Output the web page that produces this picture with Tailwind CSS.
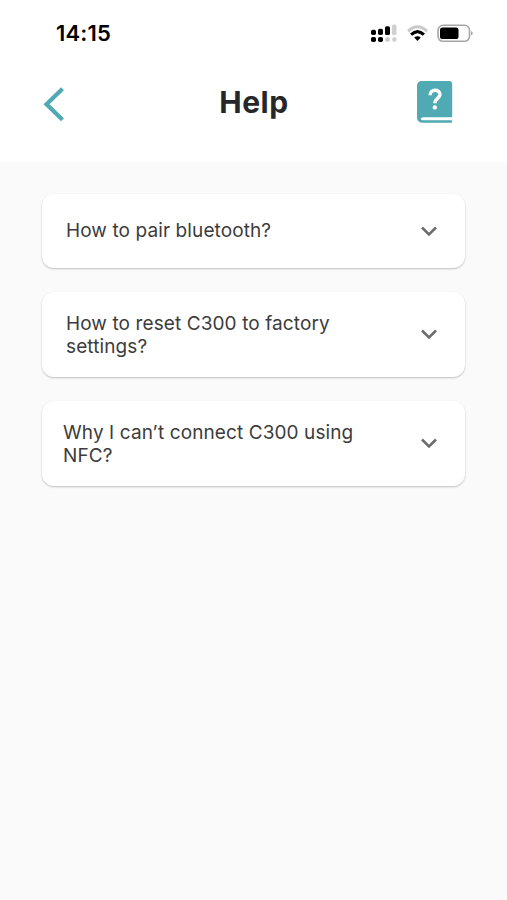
<!DOCTYPE html>
<html lang="en">
<head>
  <meta charset="UTF-8">
  <meta name="viewport" content="width=device-width, initial-scale=1.0">
  <title>Help</title>
  <script src="https://cdn.jsdelivr.net/npm/@tailwindcss/browser@4"></script>
</head>
<body class="min-h-screen bg-[#fafafa] font-[Inter,sans-serif]">
<header class="h-[162px] bg-white">
  <!-- Status bar -->
  <div class="flex h-[66px] items-center justify-between pl-14 pr-[34px]">
    <span class="text-[22px] font-semibold leading-none tracking-[0.2px] text-black">14:15</span>
    <div class="flex items-center">
      <svg class="h-5 w-[27px]" viewBox="0 0 27 20">
        <rect x="1" y="6.8" width="5" height="5.2" rx="1.8"/>
        <rect x="8" y="5.8" width="5" height="6.2" rx="1.8"/>
        <rect x="15" y="3.3" width="5" height="8.7" rx="1.6"/>
        <rect x="22" y="1.5" width="4.5" height="10.5" rx="1.6" fill="#d0d0d0"/>
        <rect x="1" y="14" width="5" height="5" rx="1.8"/>
        <rect x="8" y="14" width="5" height="5" rx="1.8"/>
        <rect x="15.2" y="14.2" width="4.6" height="4.6" rx="1.8" fill="#c8c8c8"/>
        <rect x="22.2" y="14.2" width="4.3" height="4.6" rx="1.8" fill="#d0d0d0"/>
      </svg>
      <svg class="ml-[10px] h-5 w-[21px]" viewBox="0 0 21 20" fill="none" stroke-width="2.8">
        <path d="M1 8.2Q10.5 -.6 20 8.2" stroke="#c8c8c8"/>
        <path d="M4.1 11.7Q10.5 5.5 16.9 11.7" stroke="#000" stroke-width="3.2"/>
        <path d="M7.2 14.6Q10.5 11.9 13.8 14.6L10.5 18Z" fill="#000"/>
      </svg>
      <svg class="ml-[9px] h-5 w-[36px]" viewBox="0 0 36 20">
        <rect x="1" y="2.3" width="31.5" height="16" rx="5" fill="#fff" stroke="#a6a6a6" stroke-width="1.6"/>
        <rect x="3" y="4.5" width="18.5" height="11.6" rx="2.6"/>
        <path d="M34 8v4.6q1.7-.8 1.7-2.3T34 8Z" fill="#a6a6a6"/>
      </svg>
    </div>
  </div>

  <!-- Title bar -->
  <div class="flex items-center justify-between pl-[43px] pr-[54px] pt-[15px]">
    <svg class="mt-[3px] h-[36px] w-[22px]" viewBox="0 0 22 36" fill="none" stroke="#50aab4" stroke-width="4.2">
      <path d="M19.5 2.8L3.5 18.3L19.5 33.8"/>
    </svg>
    <h1 class="pl-[26px] text-[30px] font-bold leading-[42px] tracking-[0.5px] text-[#25272b]">Help</h1>
    <svg class="h-[42px] w-[36px]" viewBox="0 0 36 42">
      <path d="M5 0H32Q35.2 0 35.2 3.2V35.5Q35.2 36.3 34.4 36.3H6.5Q3.7 36.3 3.7 37.8T6.5 39.3H34.4Q35.2 39.3 35.2 40T34.4 41.8H6Q0 41.8 0 36V5Q0 0 5 0Z" fill="#50aab4"/>
      <path d="M13.1 14.2C13 7.8 23 7.6 23 13.6C23 17.4 17.8 17.6 17.8 22.2" fill="none" stroke="#fff" stroke-width="3.5"/>
      <circle cx="17.8" cy="26.4" r="2.2" fill="#fff"/>
    </svg>
  </div>
</header>

<!-- Questions -->
<main class="flex flex-col gap-6 pl-[42px] pr-[42px] pt-8 text-[19px] leading-[23px] tracking-[0.1px] text-[#3c3c3c]">
  <div class="flex h-[74px] items-center justify-between rounded-xl bg-white pl-6 pr-[27px] shadow-[0_1px_2px_rgba(0,0,0,0.24)]">
    <p class="pb-0.5">How to pair bluetooth?</p>
    <svg class="h-[11px] w-[18px]" viewBox="0 0 18 11" fill="none" stroke="#6c6c6c" stroke-width="2.5">
      <path d="M2 1.5L9 8.5L16 1.5"/>
    </svg>
  </div>
  <div class="flex h-[85px] items-center justify-between rounded-xl bg-white pl-6 pr-[27px] shadow-[0_1px_2px_rgba(0,0,0,0.24)]">
    <p>How to reset C300 to factory<br>settings?</p>
    <svg class="h-[11px] w-[18px]" viewBox="0 0 18 11" fill="none" stroke="#6c6c6c" stroke-width="2.5">
      <path d="M2 1.5L9 8.5L16 1.5"/>
    </svg>
  </div>
  <div class="flex h-[85px] items-center justify-between rounded-xl bg-white pl-[21px] pr-[27px] shadow-[0_1px_2px_rgba(0,0,0,0.24)]">
    <p>Why I can’t connect C300 using<br>NFC?</p>
    <svg class="h-[11px] w-[18px]" viewBox="0 0 18 11" fill="none" stroke="#6c6c6c" stroke-width="2.5">
      <path d="M2 1.5L9 8.5L16 1.5"/>
    </svg>
  </div>
</main>
</body>
</html>
